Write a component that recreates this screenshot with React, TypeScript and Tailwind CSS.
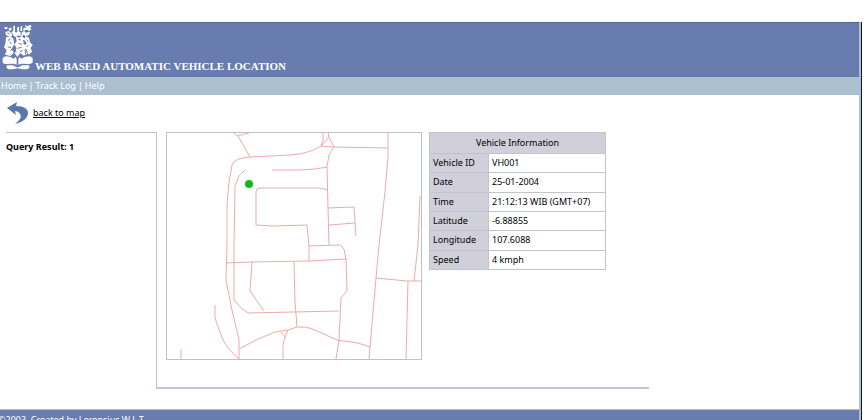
const vehicle = [
  { label: "Vehicle ID", value: "VH001" },
  { label: "Date", value: "25-01-2004" },
  { label: "Time", value: "21:12:13 WIB (GMT+07)" },
  { label: "Latitude", value: "-6.88855" },
  { label: "Longitude", value: "107.6088" },
  { label: "Speed", value: "4 kmph" },
];

const roads = [
  "M67 0 71 4 83 1M72 4 80 18 84 25",
  "M155 14Q142 22 124 23L84 25Q68 26 66 33L63 50 61 73 61 113 60 148 66 178 73 208V227",
  "M79 38 73 44 69 54 68 113V168Q75 177 82 181L173 179",
  "M106 38H134L149 37 161 35",
  "M162 58 154 56H94Q90 56 90 60V93L107 94 141 93 143 114V129",
  "M157 0V8L155 14 163 5 162 0M163 5 168 15 163 23 161 35 162 76 163 113",
  "M155 14 167 15 222 16",
  "M222 0V25L219 60 213 113 210 146 204 215 203 227",
  "M254 64 252 113 248 149M210 146 241 149H255M242 149 240 227",
  "M162 76 188 75 190 104M163 93 189 91",
  "M143 114 174 113 178 117 180 127 181 159 175 166 173 208 170 227",
  "M180 127 143 129 86 130 60 131",
  "M86 130 84 159 98 179M128 130 129 170 131 195",
  "M73 217Q92 206 109 200L122 198 131 195Q141 194 149 198L171 208 192 211 204 215",
  "M122 198 119 205 117 213V227M115 200 119 205",
  "M49 173V186L56 206Q62 218 73 227",
  "M15 217V227",
];

const Crest = () => (
  <svg className="w-8 h-12 shrink-0" viewBox="0 0 96 144" fill="#fff" aria-hidden="true">
    <path d="M8 6h9l-2 7-7-2zM20 10l8-2 1 7-8 3zM34 2h5v16h-5zM45 8l6-3v13h-5zM56 4h5l-1 14h-5zM66 8l6 1-4 9-5-2zM69 0l7 4 8-4 5 3-5 6 5 4-8 5-6-4-7 1 4-6z" />
    <path d="M10 21l10-3 7 6 8-8 7 7 7-6 8 7 9-6 5 5 13-3-3 10-9 4-7-5-7 6-9-4-8 5-9-5-8 5-12-5z" />
    <path d="M12 37l14-3 8 7 3 17-8 13 6 13-10 9-16-4 5-13-8-9 4-11zM41 34l12 4 7-5 8 9-4 14 10 6-5 13 8 11-12 6-10-8-9 12-8-12 6-14-7-12 7-9zM70 34l11 4 3 14 8 8-6 8 4 12-10 9-6-15-7-9 7-10-7-11z" />
    <path d="M2 99l8-5 14 1 11 6 6-5 3 7v16l-9-3-27 1-6-4zM92 99l-8-5-14 1-12 6-6-5-3 7v16l9-3 26 1 8-4z" />
    <path d="M14 121h18l12 6h5l12-6h21v8l-7 4H61l-14-3-14 3H20l-6-4z" />
    <path
      d="M18 46l7-3M22 52l7 3M17 65l10 3M24 77l6-5M49 43l8 2M50 55l10 3M47 70l12-3M54 80l8-4M74 45l5 5M79 61l-5 5M29 24l4 8M59 23l-3 8M17 22l5 6M40 40l-3 12M38 65l4 17M69 76l2 12M64 45l4 9"
      fill="none"
      stroke="#687cb0"
      strokeWidth="3"
    />
  </svg>
);

const BackArrow = () => (
  <svg className="w-6 h-6 shrink-0" viewBox="0 0 24 24" aria-hidden="true">
    <path
      d="M1 7 11 1 10 5C18 5 22 8 22 12 22 17 17 21 9 23 14 19 16 16 14 13 13 11 11 10 9 10L10 14Z"
      fill="#5879aa"
    />
  </svg>
);

const VehicleMap = () => (
  <svg
    className="w-64 h-[228px] shrink-0 bg-white border border-[#bfc2c5]"
    viewBox="1 1 254 226"
    role="img"
    aria-label="Vehicle position on the street map"
  >
    <g fill="none" stroke="#ecaaad" strokeWidth="1">
      {roads.map((d) => (
        <path key={d} d={d} />
      ))}
    </g>
    <circle cx="83" cy="52" r="4" fill="#10bd18" />
  </svg>
);

const App = () => {
  return (
    <div className="h-screen overflow-hidden bg-white pt-[22px] pr-1.5 font-['Noto_Sans','Open_Sans',sans-serif] text-[9px] leading-4 text-black">
      <div className="h-full border-r border-[#101828]">
        <div className="flex h-full flex-col border-r-2 border-[#adc0d0]">
          <header className="flex h-[55px] shrink-0 items-end border-t border-[#53658f] bg-[#687cb0] pb-1 pl-0.5">
            <Crest />
            <h1 className="pl-px font-['Liberation_Serif',serif] text-[11px] leading-[14px] font-bold whitespace-nowrap text-white">
              WEB BASED AUTOMATIC VEHICLE LOCATION
            </h1>
          </header>
          <nav className="flex h-[18px] shrink-0 items-center gap-0.5 bg-[#adc0d0] pl-px text-white">
            <a href="#home">Home</a>
            <span>|</span>
            <a href="#track-log">Track Log</a>
            <span>|</span>
            <a href="#help">Help</a>
          </nav>

          <main className="flex flex-1 flex-col pl-1.5">
            <a href="#map" className="flex items-center gap-[3px] pt-1.5 pb-[7px]">
              <BackArrow />
              <span className="underline">back to map</span>
            </a>
            <div className="flex">
              <aside className="w-[150px] shrink-0 border-t border-[#bfc2c5] pt-1.5">
                <h2 className="font-bold">Query Result: 1</h2>
              </aside>
              <section className="flex w-[493px] items-start gap-[7px] border-b-2 border-l border-b-[#c0c6d8] border-l-[#bfc2c5] pb-[27px] pl-[9px]">
                <VehicleMap />
                <table className="h-[138px] w-[177px] shrink-0 border-collapse border border-[#bfc5ce] text-left">
                  <thead>
                    <tr>
                      <th colSpan={2} className="h-[21px] border border-[#bfc5ce] bg-[#d0cfda] p-0 text-center font-normal">
                        Vehicle Information
                      </th>
                    </tr>
                  </thead>
                  <tbody>
                    {vehicle.map((row) => (
                      <tr key={row.label}>
                        <th scope="row" className="w-[59px] border border-[#bfc5ce] bg-[#d0cfda] px-[3px] py-px font-normal">
                          {row.label}
                        </th>
                        <td className="border border-[#bfc5ce] px-[3px] py-px whitespace-nowrap">{row.value}</td>
                      </tr>
                    ))}
                  </tbody>
                </table>
              </section>
            </div>
          </main>

          <footer className="h-[11px] shrink-0 overflow-hidden border-t border-[#adc0d0] bg-[#687cb0] pt-0.5 text-white">
            <p className="-ml-0.5">©2003, Created by Lorensius W.L.T</p>
          </footer>
        </div>
      </div>
    </div>
  );
};

export default App;
